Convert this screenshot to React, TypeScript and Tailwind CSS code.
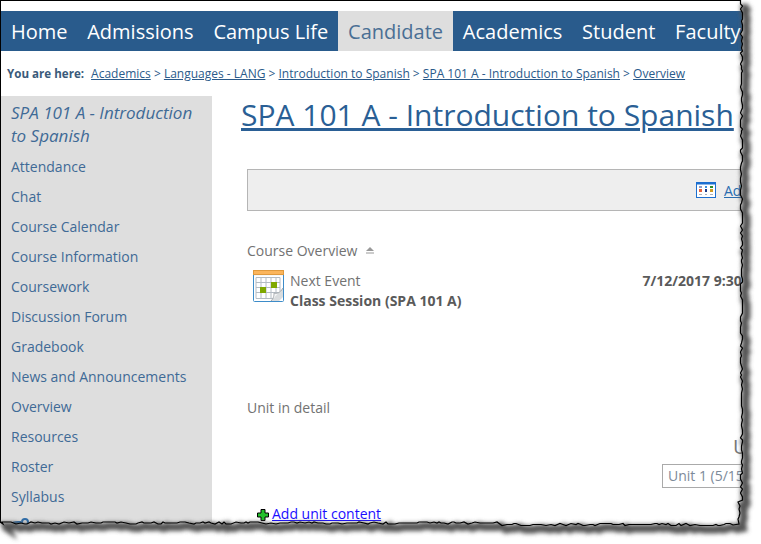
import React from "react";

const navItems = ["Home", "Admissions", "Campus Life", "Candidate", "Academics", "Student", "Faculty"];
const crumbs = ["Academics", "Languages - LANG", "Introduction to Spanish", "SPA 101 A - Introduction to Spanish", "Overview"];
const sideItems = [
  "Attendance",
  "Chat",
  "Course Calendar",
  "Course Information",
  "Coursework",
  "Discussion Forum",
  "Gradebook",
  "News and Announcements",
  "Overview",
  "Resources",
  "Roster",
  "Syllabus",
];

// jagged edge of the screenshot tool, same numbers on every run
let seed = 7;
const rnd = () => {
  seed = (seed * 16807) % 2147483647;
  return seed / 2147483647;
};
const edge: number[][] = [];
for (let y = 0; y < 522; y += 2 + Math.floor(rnd() * 3)) {
  const base = y > 500 ? 739 : 741.5;
  edge.push([base + Math.round(rnd() * 3 - 1.5), y]);
}
edge.push([739, 524], [733, 525]);
for (let x = 730; x > 0; x -= 2 + Math.floor(rnd() * 4)) {
  const base = x > 500 ? 524.5 : 523;
  edge.push([x, base + Math.round(rnd() * 2.4 - 1.4)]);
}
edge.push([3, 524], [0, 522]);
const edgePts = edge.map((p) => p.join(",")).join(" ");

function CalendarIcon() {
  return (
    <svg width="31" height="32" viewBox="0 0 31 32" className="shrink-0">
      <rect x="0.5" y="0.5" width="30" height="31" rx="1" fill="#fff" stroke="#3d8cc9" />
      <rect x="0.500" y="0.5" width="30" height="4" fill="#fbb55c" stroke="#e09a3e" />
      <rect x="1" y="5" width="29" height="1" fill="#f7f7f7" />
      <path d="M3 7.500h24v21H3zM3 12.500h24M3 17.500h24M3 22.500h24M8 7.500v21M13 7.500v21M18 7.500v21M23 7.500v21" fill="none" stroke="#b4bcc4" />
      <rect x="18" y="12" width="6" height="6" fill="#7fa800" />
      <rect x="7" y="17" width="6" height="6" fill="#7fa800" />
      <path d="M18 31l12-13v9l-4 4z" fill="#d9dcde" />
      <path d="M18 31c3-3 3-6 3-8 3 1 6 0 9-5" fill="#f4f5f6" stroke="#a4a9ad" />
    </svg>
  );
}

function GridIcon() {
  return (
    <svg width="20" height="16" viewBox="0 0 20 16" className="shrink-0">
      <rect x="0.5" y="0.5" width="19" height="15" fill="#fff" stroke="#1c6fd0" />
      <rect x="0.5" y="0.5" width="19" height="2" fill="#1c6fd0" />
      <rect x="3" y="4" width="3" height="2" fill="#8a9cc8" />
      <rect x="9" y="4" width="2" height="2" fill="#3a8ee0" />
      <rect x="14" y="4" width="3" height="2" fill="#2a8a2a" />
      <rect x="3" y="7" width="3" height="3" fill="#e8623a" />
      <rect x="9" y="7" width="2" height="3" fill="#1f3c88" />
      <rect x="14" y="7" width="3" height="3" fill="#d09a20" />
      <rect x="3" y="12" width="3" height="1" fill="#aab0b8" />
      <rect x="9" y="12" width="2" height="1" fill="#aab0b8" />
      <rect x="14" y="12" width="3" height="1" fill="#aab0b8" />
    </svg>
  );
}

export default function App() {
  return (
    <div className="relative h-[544px] w-[761px] overflow-hidden bg-white font-['Open_Sans',sans-serif] text-[#727272]">
      <div className="h-[544px] w-[761px] overflow-hidden border-t border-l border-black pt-[10px]">
        <nav className="flex h-10 w-[900px] bg-[#295b8c] text-[20px] leading-[42px] text-white">
          {navItems.map((item) => (
            <div key={item} className={item === "Candidate" ? "bg-[#dedede] px-[9.900px] text-[#4a6f94]" : "px-[9.900px]"}>
              {item}
            </div>
          ))}
        </nav>

        <div className="flex h-[45px] items-center whitespace-nowrap pl-[6px] text-[12px] text-[#2a5a8a]">
          <b className="mr-[7px] text-[11.600px] text-[#3a5a7a]">You are here:</b>
          <span>
            {crumbs.map((c, i) => (
              <span key={c}>
                <a className="underline">{c}</a>
                {i < crumbs.length - 1 && " > "}
              </span>
            ))}
          </span>
        </div>

        <div className="flex">
          <aside className="h-[430px] w-[211px] shrink-0 bg-[#dedede] pl-[10px] text-[14px] text-[#3f6a96]">
            <div className="mb-[5px] w-[186px] pt-[5px] text-[17px] italic leading-[23px]">SPA 101 A - Introduction to Spanish</div>
            {sideItems.map((s) => (
              <div key={s} className="h-[30px] leading-[30px]">{s}</div>
            ))}
            <svg width="18" height="12" viewBox="0 0 18 12" className="mt-[5px]">
              <path d="M0 6c2-2 6-2 10-2v4H1z" fill="#2f6da8" />
              <circle cx="14" cy="5" r="3" fill="none" stroke="#2f6da8" strokeWidth="2" />
            </svg>
          </aside>

          <main className="w-[600px] shrink-0 pl-[29px]">
            <h1 className="whitespace-nowrap pt-[1px] text-[30px] leading-[36px] text-[#2a5f95] underline">SPA 101 A - Introduction to Spanish</h1>

            <div className="ml-[6px] mt-[36px] flex h-[42px] w-[600px] items-center gap-2 border border-[#b5b5b5] bg-[#eeeeee] pl-[448px] text-[14px] text-[#2a6db0]">
              <GridIcon />
              <a className="underline">Add</a>
            </div>

            <div className="ml-[6px] mt-[29px] flex items-center gap-[8px] text-[14px]">
              Course Overview
              <svg width="10" height="7" viewBox="0 0 10 7"><path d="M5 0l4 4H1z" fill="#999" /><path d="M1 6h8" stroke="#999" /></svg>
            </div>

            <div className="ml-[12px] mt-[9px] flex w-[560px] items-start gap-[6px] text-[14px] leading-[20px]">
              <CalendarIcon />
              <div className="mt-[1px]">
                <div>Next Event</div>
                <div className="font-bold text-[#5a5a5a]">Class Session (SPA 101 A)</div>
              </div>
              <div className="ml-[175px] mt-[1px] whitespace-nowrap font-bold text-[#5a5a5a]">7/12/2017 9:30 AM</div>
            </div>

            <div className="ml-[6px] mt-[86px] text-[14px]">Unit in detail</div>

            <div className="relative h-[94px]">
              <span className="absolute left-[492px] top-[14px] text-[20px] text-[#777]">U</span>
              <div className="absolute left-[421px] top-[46px] h-[24px] w-[150px] whitespace-nowrap border border-[#aaa] bg-white pl-[5px] text-[14px] leading-[22px] text-[#7d8a99]">Unit 1 (5/15/2017)</div>
              <div className="absolute left-[16px] top-[85px] flex items-center gap-[3px] text-[14px] text-[#1a0dff]">
                <svg width="12" height="12" viewBox="0 0 12 12" className="mt-[3px]"><path d="M4 .500h4V4h3.500v4H8v3.500H4V8H.500V4H4z" fill="#22c02a" stroke="#000" /></svg>
                <a className="underline">Add unit content</a>
              </div>
            </div>
          </main>
        </div>
      </div>

      {/* torn edge sits over the page */}
      <svg className="absolute inset-0" width="761" height="544" viewBox="0 0 761 544">
        <defs>
          <filter id="blur" x="-5%" y="-5%" width="110%" height="110%"><feGaussianBlur stdDeviation="2" /></filter>
        </defs>
        <polygon points={`${edgePts} 0,544 761,544 761,0`} fill="#fff" />
        <polyline points={edgePts} transform="translate(4 4)" fill="none" stroke="#555" strokeWidth="8" filter="url(#blur)" />
        <polyline points={edgePts} fill="none" stroke="#000" strokeWidth="1.2" />
      </svg>
    </div>
  );
}
